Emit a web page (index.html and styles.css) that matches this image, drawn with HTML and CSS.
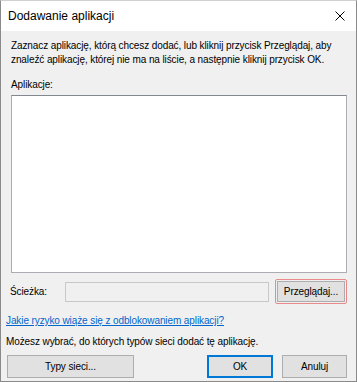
FILE: index.html
```html
<!DOCTYPE html>
<html lang="pl">
<head>
  <meta charset="UTF-8" />
  <title>Dodawanie aplikacji</title>
  <link rel="stylesheet" href="styles.css">
</head>
<body>

  <div class="window">
    <div class="titlebar">
      <span class="title">Dodawanie aplikacji</span>
      <svg class="close" width="10" height="10" viewBox="0 0 10 10">
        <path d="M0.5 0.5 L9.5 9.5 M9.5 0.5 L0.5 9.5" stroke="#000" stroke-width="1" fill="none" />
      </svg>
    </div>

    <div class="content">
      <p class="intro">Zaznacz aplikację, którą chcesz dodać, lub kliknij przycisk Przeglądaj, aby znaleźć aplikację, której nie ma na liście, a następnie kliknij przycisk OK.</p>

      <div class="list-label">Aplikacje:</div>
      <div class="app-list"></div>

      <div class="path-row">
        <span class="path-label">Ścieżka:</span>
        <div class="path-input"></div>
        <div class="focus-ring">
          <button class="btn browse">Przeglądaj...</button>
        </div>
      </div>

      <a class="risk-link" href="#">Jakie ryzyko wiąże się z odblokowaniem aplikacji?</a>

      <p class="note">Możesz wybrać, do których typów sieci dodać tę aplikację.</p>

      <div class="actions">
        <button class="btn types">Typy sieci...</button>
        <button class="btn ok">OK</button>
        <button class="btn cancel">Anuluj</button>
      </div>
    </div>
  </div>

</body>
</html>
```

FILE: styles.css
```css
body {
  margin: 0;
  padding: 0;
  background-color: #fff;
  font-family: 'Liberation Sans', Arial, sans-serif;
  font-size: 10px;
  letter-spacing: -0.1px;
  color: #000;
}

.window {
  width: 357px;
  height: 382px;
  box-sizing: border-box;
  border: 1px solid #8a8a8a;
  border-top-color: #d0d0d0;
  background-color: #f0f0f0;
  display: flex;
  flex-direction: column;
}

.titlebar {
  height: 30px;
  background-color: #fff;
  display: flex;
  align-items: center;
  justify-content: space-between;
  padding: 0 11px 0 7px;
}

.title {
  font-size: 12px;
  letter-spacing: 0;
  padding-bottom: 1px;
}

.close {
  display: block;
}

.content {
  flex: 1;
  padding: 8px 9px 0 5px;
  display: flex;
  flex-direction: column;
}

.intro {
  margin: 0 0 0 5px;
  line-height: 14px;
}

.list-label {
  margin: 11px 0 0 5px;
  line-height: 14px;
}

.app-list {
  margin: 3px 0 0 5px;
  height: 176px;
  background-color: #fff;
  border: 1px solid #abadb3;
  border-top-color: #828790;
}

.path-row {
  display: flex;
  align-items: center;
  margin-top: 6px;
  margin-left: 4px;
}

.path-label {
  width: 55px;
}

.path-input {
  width: 204px;
  height: 18px;
  border: 1px solid #c8c8c8;
  background-color: #f0f0f0;
}

.focus-ring {
  margin-left: 6px;
  padding: 1px;
  border: 1px solid #e88a8a;
  border-radius: 2px;
}

.btn {
  font-family: inherit;
  font-size: 10px;
  letter-spacing: inherit;
  color: #000;
  background-color: #e1e1e1;
  border: 1px solid #adadad;
  padding: 0;
  margin: 0;
  height: 23px;
  flex: none;
  box-sizing: border-box;
}

.browse {
  display: block;
  width: 68px;
  height: 21px;
}

.risk-link {
  margin-top: 10px;
  color: #0066cc;
  line-height: 14px;
  align-self: flex-start;
}

.note {
  margin: 7px 0 0 0;
  line-height: 14px;
}

.actions {
  display: flex;
  margin-top: 6px;
  padding-left: 1px;
}

.types {
  width: 127px;
}

.ok {
  width: 66px;
  margin-left: auto;
  border: 2px solid #0078d7;
}

.cancel {
  width: 65px;
  margin-left: 9px;
}
```
